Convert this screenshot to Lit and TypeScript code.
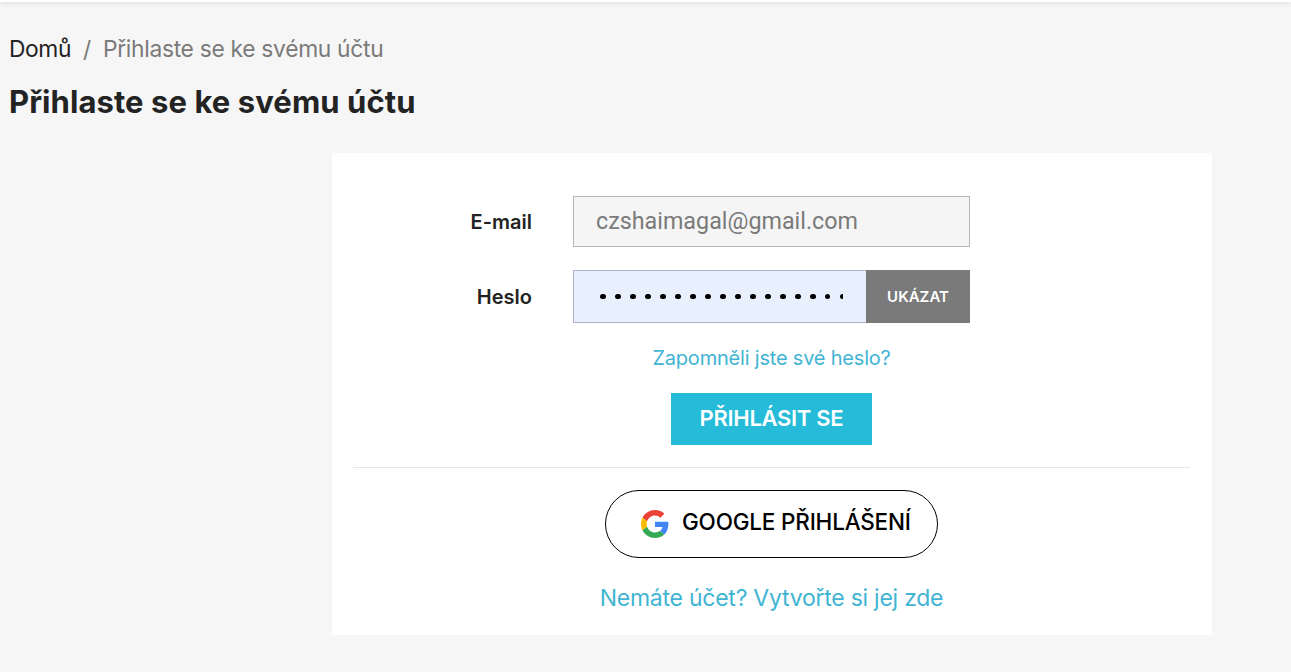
import { LitElement, html, css } from 'lit';
import { customElement } from 'lit/decorators.js';

@customElement('app-root')
export class AppRoot extends LitElement {
  private googleIcon() {
    return html`
      <svg class="g-icon" viewBox="0 0 48 48" aria-hidden="true">
        <path fill="#EA4335" d="M24 9.5c3.54 0 6.71 1.22 9.21 3.6l6.85-6.85C35.9 2.38 30.47 0 24 0 14.62 0 6.51 5.38 2.56 13.22l7.98 6.19C12.43 13.72 17.74 9.5 24 9.5z"/>
        <path fill="#4285F4" d="M46.98 24.55c0-1.57-.15-3.09-.38-4.55H24v9.02h12.94c-.58 2.96-2.26 5.48-4.78 7.18l7.73 6c4.51-4.18 7.09-10.36 7.09-17.65z"/>
        <path fill="#FBBC05" d="M10.53 28.59c-.48-1.45-.76-2.99-.76-4.59s.27-3.14.76-4.59l-7.98-6.19C.92 16.46 0 20.12 0 24c0 3.88.92 7.54 2.56 10.78l7.97-6.19z"/>
        <path fill="#34A853" d="M24 48c6.48 0 11.93-2.13 15.89-5.81l-7.73-6c-2.15 1.45-4.92 2.3-8.16 2.3-6.26 0-11.57-4.22-13.47-9.91l-7.98 6.19C6.51 42.62 14.62 48 24 48z"/>
      </svg>
    `;
  }

  override render() {
    return html`
      <div class="page">
        <div class="topbar"></div>

        <nav class="crumbs">
          <a class="home">Domů</a>
          <span class="sep">/</span>
          <span class="current">Přihlaste se ke svému účtu</span>
        </nav>

        <h1>Přihlaste se ke svému účtu</h1>

        <div class="card">
          <div class="row">
            <label>E-mail</label>
            <div class="field email">czshaimagal@gmail.com</div>
          </div>

          <div class="row pass-row">
            <label>Heslo</label>
            <div class="pass-group">
              <div class="field pass">
                <span class="dots">${Array.from({ length: 16 }, () => html`<i></i>`)}<i class="cut"></i></span>
              </div>
              <button class="show">UKÁZAT</button>
            </div>
          </div>

          <a class="forgot">Zapomněli jste své heslo?</a>
          <button class="submit">PŘIHLÁSIT SE</button>

          <div class="divider"></div>

          <button class="google">
            ${this.googleIcon()}
            <span class="google-label">GOOGLE PŘIHLÁŠENÍ</span>
          </button>

          <a class="create">Nemáte účet? Vytvořte si jej zde</a>
        </div>
      </div>
    `;
  }

  static override styles = css`
    :host {
      display: block;
      font-family: Inter, 'Noto Sans', sans-serif;
      color: #232323;
    }

    .page {
      background: #f6f6f6;
      height: 100vh;
      box-sizing: border-box;
      overflow: hidden;
    }

    .topbar {
      height: 2px;
      background: #fff;
      box-shadow: 0 1px 5px rgba(0, 0, 0, 0.18);
    }

    /* --- Header --- */

    .crumbs {
      display: flex;
      align-items: center;
      margin: 33px 0 0 9px;
      height: 27px;
      font-size: 22.8px;
      letter-spacing: -0.3px;
    }

    .home {
      color: #232323;
      letter-spacing: -0.4px;
    }

    .sep {
      margin: 0 12px;
      color: #7a7a7a;
    }

    .current {
      color: #7a7a7a;
    }

    h1 {
      margin: 21px 0 0 9px;
      height: 37px;
      font-size: 31px;
      line-height: 37px;
      font-weight: 700;
      letter-spacing: 0.08px;
      color: #232323;
    }

    /* --- Card --- */

    .card {
      box-sizing: border-box;
      width: 880px;
      height: 482px;
      margin: 33px 0 0 332px;
      padding: 43px 1px 0 0;
      background: #fff;
      display: flex;
      flex-direction: column;
      align-items: center;
    }

    .row {
      display: flex;
      align-items: center;
      align-self: flex-start;
    }

    .pass-row {
      margin-top: 23px;
    }

    label {
      width: 200px;
      margin-right: 41px;
      text-align: right;
      font-size: 20px;
      font-weight: 600;
      color: #232323;
    }

    .field {
      box-sizing: border-box;
      border: 1px solid #b5b7bb;
    }

    .email {
      width: 397px;
      height: 51px;
      padding-left: 22px;
      background: #f5f5f5;
      font-family: Roboto, 'Liberation Sans', sans-serif;
      font-size: 23.3px;
      line-height: 49px;
      color: #7a7a7a;
    }

    .pass-group {
      display: flex;
      width: 397px;
      height: 53px;
    }

    .pass {
      flex: 1;
      display: flex;
      align-items: center;
      padding-left: 26.4px;
      background: #e8f0fe;
      border-color: #aab4c4;
      border-right: none;
    }

    .dots {
      display: flex;
      gap: 9.16px;
    }

    .dots i {
      width: 5.8px;
      height: 5.8px;
      border-radius: 50%;
      background: #000;
    }

    .dots i.cut {
      width: 3px;
      border-radius: 3px 0 0 3px;
    }

    .show {
      width: 104px;
      border: none;
      padding: 0;
      background: #7a7a7a;
      color: #fff;
      font-family: inherit;
      font-size: 15px;
      font-weight: 600;
    }

    .forgot,
    .create {
      color: #3fb4d3;
    }

    .forgot {
      margin-top: 23px;
      height: 24px;
      line-height: 24px;
      font-size: 20px;
      letter-spacing: -0.2px;
    }

    .submit {
      width: 201px;
      height: 52px;
      margin-top: 23px;
      border: none;
      padding: 0 0 2px;
      background: #25bbd9;
      color: #fff;
      font-family: inherit;
      font-size: 22px;
      font-weight: 600;
      letter-spacing: -0.3px;
    }

    .divider {
      width: 837px;
      height: 1px;
      margin-top: 22px;
      background: #e6e6e6;
    }

    .google {
      box-sizing: border-box;
      width: 333px;
      height: 68px;
      margin-top: 22px;
      display: flex;
      align-items: center;
      gap: 13px;
      padding: 0 0 0 35px;
      border: 1px solid #000;
      border-radius: 34px;
      background: #fff;
      color: #000;
      font-family: inherit;
      font-size: 22.5px;
      font-weight: 500;
      letter-spacing: -0.2px;
      white-space: nowrap;
    }

    .google-label {
      margin-bottom: 6px;
    }

    .g-icon {
      width: 28px;
      height: 28px;
      flex: none;
    }

    .create {
      margin-top: 26px;
      height: 29px;
      line-height: 29px;
      font-size: 23px;
      letter-spacing: -0.25px;
    }
  `;
}
